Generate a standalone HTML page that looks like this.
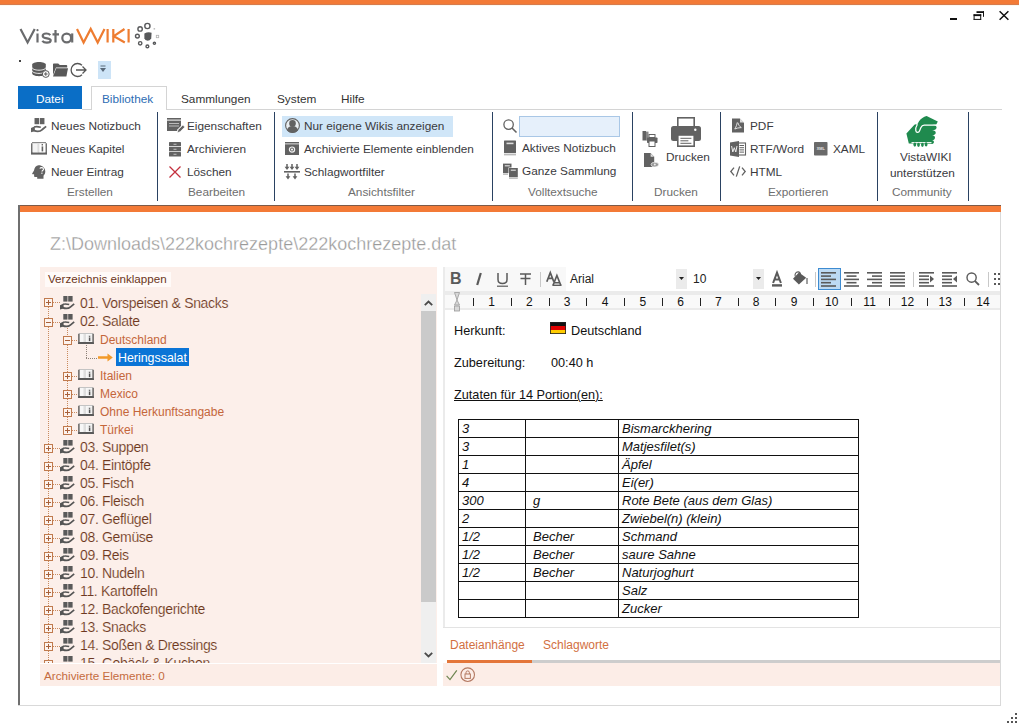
<!DOCTYPE html>
<html><head><meta charset="utf-8">
<style>
html,body{margin:0;padding:0;width:1019px;height:727px;overflow:hidden;background:#fff;position:relative;font-family:"Liberation Sans",sans-serif;}
.a{position:absolute;white-space:nowrap;}
.t12{font-size:11.8px;line-height:12px;color:#3a3a3e;}
.lbl{font-size:11.8px;line-height:12px;color:#6e6e6e;}
.sep{position:absolute;width:1px;background:#2a4262;top:112px;height:89px;}
svg{position:absolute;overflow:visible;}
.tr0{font-size:14px;line-height:14px;color:#6e3820;letter-spacing:-0.33px;-webkit-text-stroke:0.15px #fcefea;}
.tr1{font-size:12px;line-height:12px;color:#c4663a;}
.cell{position:absolute;font-size:13.33px;line-height:13px;font-style:italic;color:#111;white-space:nowrap;}
</style></head><body>

<div class="a" style="left:0;top:0;width:1019px;height:4px;background:#f37a36;"></div>
<div class="a" style="left:0;top:4px;width:1019px;height:1px;background:#d67c4e;"></div>
<div class="a" style="left:0;top:5px;width:1019px;height:1px;background:#fdf8ee;"></div>
<div class="a" style="left:950px;top:17.6px;width:7px;height:2.6px;background:#111;"></div>
<svg style="left:973px;top:11px" width="11" height="9" viewBox="0 0 11 9"><g fill="#111"><rect x="3.5" y="0.2" width="7.5" height="1.8"/><rect x="10" y="0.2" width="1" height="5.6"/><rect x="0.6" y="3.2" width="7.6" height="1.9"/><rect x="0.6" y="3.2" width="1" height="5.6"/><rect x="7.2" y="3.2" width="1" height="5.6"/><rect x="0.6" y="7.9" width="7.6" height="1"/></g></svg>
<svg style="left:999px;top:11px" width="10" height="9" viewBox="0 0 10 9"><path d="M0.6 0.3L9.4 8.7M9.4 0.3L0.6 8.7" stroke="#111" stroke-width="1.5"/></svg>
<svg style="left:0;top:0" width="170" height="60" viewBox="0 0 170 60">
<g fill="none" stroke="#6a6b6d" stroke-width="2.2" stroke-linejoin="miter">
<path d="M20.5 29L27.6 42.5L34.7 29"/>
<path d="M37.5 33.5V42.5"/>
<path d="M50.3 35.2c-0.8-1.1-2.2-1.7-4-1.7c-2.2 0-3.6 1-3.6 2.4c0 3.2 8 1.9 8 4.4c0 1.5-1.5 2.4-3.9 2.4c-2 0-3.6-0.7-4.5-1.9"/>
<path d="M55.5 30V42.5M52.5 34.3H59"/>
<circle cx="66.7" cy="38" r="4.4"/>
<path d="M72.2 33.4V42.5"/>
</g>
<circle cx="37.5" cy="30.2" r="1.1" fill="#6a6b6d"/>
<g fill="none" stroke="#ee7c30" stroke-width="2.2">
<path d="M77 29L83.6 42.5L90.7 29L97.7 42.5L104.5 29"/>
<path d="M107.6 29V42.5"/>
<path d="M113.3 29V42.5M124.5 29L113.8 36.2L124.8 42.5"/>
<path d="M128.6 29V42.5"/>
</g>
<g fill="none" stroke="#58595b" stroke-width="1.4">
<circle cx="140.1" cy="28.9" r="2.2"/><circle cx="147.4" cy="26" r="2.6"/><circle cx="137.4" cy="36.1" r="1.9"/><circle cx="140.2" cy="43.3" r="1.7"/><circle cx="147.4" cy="46.4" r="1.4"/><circle cx="154.4" cy="43.3" r="1.1"/>
</g>
<path d="M144.4 33.6Q148 31.6 151.6 32.8L151.2 38.6Q149.9 40.8 147.6 40.8Q144.9 40.5 144.4 38.3z" fill="#58595b"/>
<rect x="156.3" y="35.3" width="2.4" height="2.4" fill="none" stroke="#b0b0b0" stroke-width="0.8"/>
<rect x="153.6" y="28" width="1.5" height="1.6" fill="#c0c0c0"/>
</svg>
<div class="a" style="left:19px;top:60px;width:2px;height:2px;background:#444"></div>
<svg style="left:32px;top:62px" width="18" height="16" viewBox="0 0 18 16">
<path d="M0.2 2.6C0.2 1.2 3.2 0 7 0s6.8 1.2 6.8 2.6V11.6c0 1.5-3 2.6-6.8 2.6S0.2 13.1 0.2 11.6z" fill="#595959"/>
<path d="M0.2 5.6c0 1.4 3 2.6 6.8 2.6s6.8-1.2 6.8-2.6M0.2 8.8c0 1.4 3 2.6 6.8 2.6s6.8-1.2 6.8-2.6" fill="none" stroke="#fff" stroke-width="0.9"/>
<circle cx="13.8" cy="12" r="3.4" fill="#fff" stroke="#595959" stroke-width="1"/><path d="M13.8 10.2v3.6M12 12h3.6" stroke="#595959" stroke-width="1"/></svg>
<svg style="left:53px;top:63px" width="15" height="14" viewBox="0 0 15 14"><path d="M0 1.2Q0 0.4 0.8 0.4h4.4l1.6 1.6h6.6q0.8 0 0.8 0.8V4.6H3L0 12z" fill="#595959"/><path d="M3.2 5.2H15L13.4 13.4H0z" fill="#595959"/></svg>
<svg style="left:71px;top:62px" width="16" height="16" viewBox="0 0 16 16"><path d="M11 3.2A6.5 6.5 0 1 0 11 12.8" fill="none" stroke="#555" stroke-width="1.3"/><path d="M5 8h10M11.5 4.5L15 8l-3.5 3.5" fill="none" stroke="#555" stroke-width="1.3"/></svg>
<div class="a" style="left:98px;top:61px;width:13px;height:18px;background:#cde4f7;"></div>
<svg style="left:100px;top:65px" width="6" height="7" viewBox="0 0 6 7"><rect x="0.5" y="0.5" width="5" height="1" fill="#5a6a7a"/><path d="M0 3h6L3 7z" fill="#5a6a7a"/></svg>
<div class="a" style="left:82px;top:109px;width:920px;height:1px;background:#d4d4d4;"></div>
<div class="a" style="left:18px;top:86px;width:64px;height:23px;background:#0a6ec6;"></div>
<div class="a t12" style="left:36px;top:93px;color:#fff;">Datei</div>
<div class="a" style="left:91px;top:86px;width:76px;height:24px;border:1px solid #d4d4d4;border-bottom:none;background:#fff;box-sizing:border-box;"></div>
<div class="a t12" style="left:102px;top:93px;color:#2e6db4;">Bibliothek</div>
<div class="a t12" style="left:181px;top:93px;color:#333;">Sammlungen</div>
<div class="a t12" style="left:277px;top:93px;color:#333;">System</div>
<div class="a t12" style="left:341px;top:93px;color:#333;">Hilfe</div>
<div class="sep" style="left:157px"></div>
<div class="sep" style="left:274px"></div>
<div class="sep" style="left:492px"></div>
<div class="sep" style="left:632px"></div>
<div class="sep" style="left:720px"></div>
<div class="sep" style="left:877px"></div>
<div class="sep" style="left:968px"></div>
<div class="a t12" style="left:51px;top:120px;">Neues Notizbuch</div>
<div class="a t12" style="left:51px;top:143px;">Neues Kapitel</div>
<div class="a t12" style="left:51px;top:166px;">Neuer Eintrag</div>
<div class="a lbl" style="left:67px;top:186px;">Erstellen</div>
<div class="a t12" style="left:187px;top:120px;">Eigenschaften</div>
<div class="a t12" style="left:187px;top:143px;">Archivieren</div>
<div class="a t12" style="left:187px;top:166px;">Löschen</div>
<div class="a lbl" style="left:188px;top:186px;">Bearbeiten</div>
<div class="a" style="left:282px;top:116px;width:171px;height:21px;background:#d0e6f8;"></div>
<div class="a t12" style="left:304px;top:120px;">Nur eigene Wikis anzeigen</div>
<div class="a t12" style="left:304px;top:143px;">Archivierte Elemente einblenden</div>
<div class="a t12" style="left:304px;top:166px;">Schlagwortfilter</div>
<div class="a lbl" style="left:348px;top:186px;">Ansichtsfilter</div>
<div class="a" style="left:519px;top:116px;width:101px;height:21px;background:#e6f0fb;border:1px solid #a9c7e6;box-sizing:border-box;"></div>
<div class="a t12" style="left:522px;top:142px;">Aktives Notizbuch</div>
<div class="a t12" style="left:522px;top:165px;">Ganze Sammlung</div>
<div class="a lbl" style="left:528px;top:186px;">Volltextsuche</div>
<div class="a t12" style="left:666px;top:151px;">Drucken</div>
<div class="a lbl" style="left:654px;top:186px;">Drucken</div>
<div class="a t12" style="left:750px;top:120px;">PDF</div>
<div class="a t12" style="left:750px;top:143px;">RTF/Word</div>
<div class="a t12" style="left:833px;top:143px;">XAML</div>
<div class="a t12" style="left:750px;top:166px;">HTML</div>
<div class="a lbl" style="left:768px;top:186px;">Exportieren</div>
<div class="a t12" style="left:900px;top:151px;">VistaWIKI</div>
<div class="a t12" style="left:890px;top:167px;">unterstützen</div>
<div class="a lbl" style="left:892px;top:186px;">Community</div>
<svg style="left:31px;top:118px" width="16" height="15" viewBox="0 0 15 14"><rect x="3.3" y="0" width="4.2" height="5.8" fill="#626262"/><rect x="8.2" y="0" width="4.4" height="5.8" fill="#626262"/><path d="M0 9.3L3.6 7.6V12.4L0 13.4z" fill="#626262"/><path d="M3 8.4C4.6 7.9 6.5 8 9.2 8.6" fill="none" stroke="#626262" stroke-width="1.5"/><path d="M2.6 11.6C5.4 12.8 8.6 12.6 10.6 10.8L14.2 7.8" fill="none" stroke="#626262" stroke-width="1.7"/></svg>
<svg style="left:31px;top:142px" width="16" height="13" viewBox="0 0 16 13"><path d="M0.9 1.3v10h14.2v-10" fill="none" stroke="#626262" stroke-width="1.6"/><rect x="1.6" y="0.8" width="5.8" height="10" fill="#f4f4f4"/><rect x="8.2" y="0.8" width="6.2" height="10" fill="#fff"/><rect x="1" y="0" width="14" height="1.2" fill="#8a8a8a"/><rect x="6.4" y="1" width="2" height="9.5" fill="#dcdcdc"/><rect x="10.6" y="2.2" width="1.4" height="1.2" fill="#444"/><rect x="10.6" y="4.4" width="1.6" height="5" fill="#626262"/><rect x="0" y="10.6" width="16" height="2" fill="#626262"/></svg>
<svg style="left:32px;top:165px" width="14" height="14" viewBox="0 0 14 14"><path d="M6.5 0.3c3.8 0 6.8 2.6 6.8 6.2c0 1.8-.8 3.2-1.8 4.2V13.7H5.2v-1.6H3.3c-.8 0-1.2-.5-1.2-1.2V9.3H.6c-.4 0-.6-.4-.4-.7L2 5.6C2.4 2.6 4.2.3 6.5.3z" fill="#626262"/><path d="M7.8 3.6c.4-.7 1.1-1 1.9-1c1 0 1.8.7 1.8 1.6c0 1.2-1.6 1.3-1.6 2.4" fill="none" stroke="#fff" stroke-width="1.1"/><rect x="9.3" y="7.6" width="1.2" height="1.2" fill="#fff"/></svg>
<svg style="left:167px;top:118px" width="17" height="16" viewBox="0 0 17 16"><rect x="0" y="0" width="14" height="1.6" fill="#626262"/><rect x="0" y="2.6" width="14" height="10.4" fill="#626262"/><rect x="2" y="5" width="10" height="1" fill="#bbb"/><rect x="2" y="7.5" width="10" height="1" fill="#bbb"/><path d="M9.5 14.5l1.2-3.3l5-5l2 2l-5 5z" fill="#fff"/><path d="M10.2 14.8l.9-3l4.7-4.7l2 2l-4.7 4.7z" fill="#626262" stroke="#fff" stroke-width="0.7"/></svg>
<svg style="left:169px;top:142px" width="12" height="15" viewBox="0 0 12 15"><rect x="0" y="0" width="12" height="4.3" rx="0.6" fill="#626262"/><rect x="0" y="5" width="12" height="4.3" fill="#626262"/><rect x="0" y="10" width="12" height="4.5" rx="0.6" fill="#626262"/><rect x="4.5" y="1.8" width="3" height="0.9" fill="#ccc"/><rect x="4.5" y="6.8" width="3" height="0.9" fill="#ccc"/><rect x="4.5" y="11.8" width="3" height="0.9" fill="#ccc"/></svg>
<svg style="left:169px;top:166px" width="12" height="12" viewBox="0 0 12 12"><path d="M0.5 0.5L11.5 11.5M11.5 0.5L0.5 11.5" stroke="#c4303e" stroke-width="1.25"/></svg>
<svg style="left:285px;top:118px" width="15" height="15" viewBox="0 0 15 15"><circle cx="7.5" cy="7.5" r="6.9" fill="#e9eef2" stroke="#626262" stroke-width="1.1"/><circle cx="7.5" cy="5.4" r="3.3" fill="#626262"/><path d="M1.9 12.2c.8-2.8 2.8-4.2 5.6-4.2s4.8 1.4 5.6 4.2a7 7 0 0 1-11.2 0z" fill="#626262"/></svg>
<svg style="left:285px;top:142px" width="14" height="13" viewBox="0 0 14 13"><rect x="0" y="0" width="14" height="1.5" fill="#626262"/><rect x="0" y="2.3" width="14" height="10.7" fill="#626262"/><circle cx="7" cy="7.6" r="2.6" fill="none" stroke="#f2f2f2" stroke-width="1.2"/><circle cx="7" cy="7.6" r="1.1" fill="#f2f2f2"/></svg>
<svg style="left:284px;top:164px" width="16" height="16" viewBox="0 0 16 16"><g stroke="#626262" stroke-width="1.5" fill="none"><path d="M3 0v3.5M8 0v3.5M13 0v3.5M4 9.5v3.5M11 9.5v3.5"/></g><g fill="#626262"><path d="M0.6 2.8h4.8L3 6z"/><path d="M5.6 2.8h4.8L8 6z"/><path d="M10.6 2.8h4.8L13 6z"/><path d="M1.6 12.2h4.8L4 15.4z"/><path d="M8.6 12.2h4.8L11 15.4z"/><rect x="0" y="7" width="16" height="1.6"/></g></svg>
<svg style="left:503px;top:119px" width="14" height="14" viewBox="0 0 14 14"><circle cx="5.6" cy="5.6" r="4.7" fill="none" stroke="#626262" stroke-width="1.3"/><path d="M9 9L13.5 13.5" stroke="#626262" stroke-width="1.6"/></svg>
<svg style="left:504px;top:140px" width="12" height="16" viewBox="0 0 12 16"><rect x="0" y="0.5" width="12" height="12.5" rx="0.5" fill="#626262"/><rect x="2.5" y="2.6" width="7" height="1.6" fill="#ddd"/><rect x="0" y="13.6" width="12" height="1.8" fill="#bbb"/></svg>
<svg style="left:503px;top:163px" width="15" height="16" viewBox="0 0 15 16"><rect x="0" y="0.6" width="8.5" height="9.5" fill="#626262"/><rect x="1.8" y="2.2" width="5" height="1.2" fill="#ddd"/><rect x="0" y="10.5" width="5" height="1.4" fill="#bbb"/><rect x="5.5" y="4.5" width="9.3" height="9.8" fill="#fff"/><rect x="6" y="5" width="8.8" height="9.2" fill="#626262"/><rect x="7.8" y="6.6" width="5" height="1.2" fill="#ddd"/><rect x="6" y="14.5" width="8.8" height="1.4" fill="#bbb"/></svg>
<svg style="left:642px;top:131px" width="16" height="16" viewBox="0 0 16 16"><rect x="0.5" y="0" width="3.5" height="9.5" fill="#626262"/><rect x="4" y="0.6" width="2.5" height="9" fill="#888"/><rect x="7" y="3.5" width="6" height="3" fill="#fff" stroke="#626262" stroke-width="1"/><rect x="5" y="6.5" width="10.5" height="5.5" rx="0.8" fill="#626262"/><rect x="7" y="10" width="6" height="5.5" fill="#fff" stroke="#626262" stroke-width="1"/></svg>
<svg style="left:644px;top:153px" width="15" height="15" viewBox="0 0 15 15"><path d="M0 0h6.5l3.7 3.7V14H0z" fill="#626262"/><path d="M6.6 0.4v3.4h3.4" fill="#e0e0e0"/><ellipse cx="10.8" cy="11.6" rx="3.8" ry="2.3" fill="#999" stroke="#fff" stroke-width="0.6"/><circle cx="10.8" cy="11.6" r="1" fill="#eee"/></svg>
<svg style="left:671px;top:117px" width="30" height="30" viewBox="0 0 30 30"><rect x="6.8" y="0.8" width="16.4" height="9" fill="#fff" stroke="#626262" stroke-width="1.6"/><rect x="0" y="9" width="30" height="15" rx="2.5" fill="#626262"/><circle cx="24.3" cy="12.7" r="1.2" fill="#fff"/><rect x="6.8" y="18" width="16.4" height="11.2" fill="#fff" stroke="#626262" stroke-width="1.6"/><rect x="9.4" y="20.8" width="11" height="1" fill="#626262"/><rect x="9.4" y="23.3" width="8" height="1" fill="#626262"/><rect x="9.4" y="25.8" width="11" height="1" fill="#626262"/></svg>
<svg style="left:732px;top:118px" width="12" height="15" viewBox="0 0 12 15"><path d="M0 0.5h7.8L12 4.7V14.5H0z" fill="#626262"/><path d="M8 0.6v4h4" fill="#ddd"/><path d="M5.2 4.5c-.2 1.8-.9 4-2.4 6.5c1.8-.8 4-1.4 6.5-1.4c-1.7-1-2.8-2.8-3.5-5" fill="none" stroke="#eee" stroke-width="0.9"/></svg>
<svg style="left:730px;top:141px" width="16" height="16" viewBox="0 0 16 16"><rect x="8" y="2" width="7.5" height="12" fill="#fff" stroke="#626262" stroke-width="1.1"/><rect x="9.5" y="4" width="4.5" height="1" fill="#626262"/><rect x="9.5" y="6.2" width="4.5" height="1" fill="#626262"/><rect x="9.5" y="8.4" width="4.5" height="1" fill="#626262"/><rect x="9.5" y="10.6" width="4.5" height="1" fill="#626262"/><path d="M0 1.6L9 0v16L0 14.4z" fill="#626262"/><path d="M1.6 5l1.2 6l1.5-4.3l1.5 4.3l1.2-6" fill="none" stroke="#eee" stroke-width="1"/></svg>
<svg style="left:730px;top:166px" width="16" height="11" viewBox="0 0 16 11"><path d="M4 1.6L0.8 5.5L4 9.4M12 1.6l3.2 3.9L12 9.4M9.7 0.4L6.3 10.6" fill="none" stroke="#626262" stroke-width="1.3"/></svg>
<svg style="left:814px;top:142px" width="14" height="14" viewBox="0 0 14 14"><rect x="0" y="0" width="13.5" height="13.5" rx="0.8" fill="#6a6a6a"/><text x="6.75" y="8.2" font-size="3.8" font-family="Liberation Sans" font-weight="bold" fill="#e5e5e5" text-anchor="middle">XML</text></svg>
<svg style="left:906px;top:116px" width="33" height="32" viewBox="0 0 33 32">
<path d="M0.4 17.4L8.2 8.9Q9.1 8 10 8.4L11.2 8.6L13.2 4.9C15 2.6 17.5 0.8 20.6 0L31.8 5.4L30.2 8.8H26.1C32.1 8.8 32.1 14.3 26.1 14.3C31.0 14.3 31.0 19.3 26.1 19.3C30.0 19.3 30.0 24.2 26.1 24.2C28.6 24.2 28.6 27.9 26.1 27.9L2.8 27.4z" fill="#1f8a4e"/>
<path d="M31 9.1H18.2C16.4 9.1 15.6 10 14.8 11.8L13.6 14.8C12.9 16.8 10.2 17.3 9.8 14.6C9.5 12.6 10.2 10.2 11.4 8.2" fill="none" stroke="#fff" stroke-width="1.25"/>
<rect x="5.5" y="26.1" width="20" height="1.2" fill="#fff"/>
<g fill="#1f8a4e"><ellipse cx="8.8" cy="28.6" rx="1.4" ry="2.1"/><ellipse cx="12.5" cy="28.8" rx="1.4" ry="2.1"/><ellipse cx="16.4" cy="28.8" rx="1.4" ry="2.1"/><ellipse cx="20.1" cy="28.4" rx="1.4" ry="2.1"/></g>
</svg>
<div class="a" style="left:18px;top:205px;width:983px;height:1px;background:#7c5a48;"></div>
<div class="a" style="left:18px;top:206px;width:983px;height:6px;background:#f37a36;"></div>
<div class="a" style="left:18px;top:205px;width:2px;height:501px;background:#6f6f6f;"></div>
<div class="a" style="left:1000px;top:212px;width:1px;height:494px;background:#d9d9d9;"></div>
<div class="a" style="left:18px;top:705px;width:983px;height:1px;background:#d9d9d9;"></div>
<div class="a" style="left:50px;top:235px;font-size:18px;line-height:18px;color:#9a9a9a;-webkit-text-stroke:0.3px #fff;">Z:\Downloads\222kochrezepte\222kochrezepte.dat</div>
<div class="a" style="left:40px;top:267px;width:397px;height:396px;background:#fcefea;overflow:hidden;">
<div class="a" style="left:5px;top:5px;width:126px;height:15px;background:#fffaf8;"></div>
<div class="a" style="left:8px;top:6px;font-size:11.6px;line-height:12px;color:#6b3520;">Verzeichnis einklappen</div>
<div class="a" style="left:8px;top:40px;width:1px;height:373px;background:repeating-linear-gradient(to bottom,#c98a5e 0 1px,transparent 1px 2px);"></div>
<div class="a" style="left:27px;top:61px;width:1px;height:8px;background:repeating-linear-gradient(to bottom,#c98a5e 0 1px,transparent 1px 2px);"></div>
<div class="a" style="left:27px;top:78px;width:1px;height:90px;background:repeating-linear-gradient(to bottom,#c98a5e 0 1px,transparent 1px 2px);"></div>
<div class="a" style="left:46px;top:78px;width:1px;height:13px;background:repeating-linear-gradient(to bottom,#8d8178 0 1px,transparent 1px 2px);"></div>
<svg style="left:4px;top:31px" width="9" height="9" viewBox="0 0 9 9"><rect x="0.5" y="0.5" width="8" height="8" fill="#fdf3ee" stroke="#c07a4e"/><path d="M2 4.5h5M4.5 2v5" stroke="#a8603a" stroke-width="1"/></svg>
<div class="a" style="left:13px;top:35px;width:7px;height:1px;background:repeating-linear-gradient(to right,#c98a5e 0 1px,transparent 1px 2px);"></div>
<svg style="left:20px;top:29px" width="15" height="14" viewBox="0 0 15 14"><rect x="3.3" y="0" width="4.2" height="5.6" fill="#5a5a5a"/><rect x="8.2" y="0" width="4.4" height="5.6" fill="#5a5a5a"/><path d="M0 9.3L3.6 7.6V12.4L0 13.4z" fill="#555"/><path d="M3 8.4C4.6 7.9 6.5 8 9.2 8.6" fill="none" stroke="#555" stroke-width="1.5"/><path d="M2.6 11.6C5.4 12.8 8.6 12.6 10.6 10.8L14.2 7.8" fill="none" stroke="#555" stroke-width="1.7"/></svg>
<div class="a tr0" style="left:40px;top:29px">01. Vorspeisen &amp; Snacks</div>
<svg style="left:4px;top:51px" width="9" height="9" viewBox="0 0 9 9"><rect x="0.5" y="0.5" width="8" height="8" fill="#fdf3ee" stroke="#c07a4e"/><path d="M2 4.5h5" stroke="#a8603a" stroke-width="1"/></svg>
<div class="a" style="left:13px;top:55px;width:7px;height:1px;background:repeating-linear-gradient(to right,#c98a5e 0 1px,transparent 1px 2px);"></div>
<svg style="left:20px;top:47px" width="15" height="14" viewBox="0 0 15 14"><rect x="3.3" y="0" width="4.2" height="5.6" fill="#5a5a5a"/><rect x="8.2" y="0" width="4.4" height="5.6" fill="#5a5a5a"/><path d="M0 9.3L3.6 7.6V12.4L0 13.4z" fill="#555"/><path d="M3 8.4C4.6 7.9 6.5 8 9.2 8.6" fill="none" stroke="#555" stroke-width="1.5"/><path d="M2.6 11.6C5.4 12.8 8.6 12.6 10.6 10.8L14.2 7.8" fill="none" stroke="#555" stroke-width="1.7"/></svg>
<div class="a tr0" style="left:40px;top:47px">02. Salate</div>
<svg style="left:23px;top:69px" width="9" height="9" viewBox="0 0 9 9"><rect x="0.5" y="0.5" width="8" height="8" fill="#fdf3ee" stroke="#c07a4e"/><path d="M2 4.5h5" stroke="#a8603a" stroke-width="1"/></svg>
<div class="a" style="left:32px;top:73px;width:6px;height:1px;background:repeating-linear-gradient(to right,#c98a5e 0 1px,transparent 1px 2px);"></div>
<svg style="left:38px;top:66px" width="16" height="11" viewBox="0 0 16 11"><rect x="1.4" y="0.6" width="13.2" height="9" fill="#f7f7f7"/><rect x="5.5" y="0.6" width="2.5" height="9" fill="#dedede"/><rect x="1" y="0" width="14" height="1" fill="#c4c4c4"/><path d="M0.9 0.8V9.6H15.1V0.8" fill="none" stroke="#5a5a5a" stroke-width="1.4"/><rect x="0" y="9.3" width="16" height="1.7" rx="0.6" fill="#5a5a5a"/><rect x="9.6" y="2.2" width="4" height="6" fill="#e9e9e9"/><rect x="10.9" y="2.8" width="1.3" height="1" fill="#555"/><rect x="10.9" y="4.5" width="1.4" height="3.6" fill="#555"/></svg>
<div class="a tr1" style="left:60px;top:67px">Deutschland</div>
<div class="a" style="left:46px;top:91px;width:12px;height:1px;background:repeating-linear-gradient(to right,#8d8178 0 1px,transparent 1px 2px);"></div>
<svg style="left:58px;top:86px" width="15" height="9" viewBox="0 0 15 9"><path d="M0 3.2h9.5V0.6l5.3 3.9L9.5 8.4V5.8H0z" fill="#f29a2a"/></svg>
<div class="a" style="left:76px;top:81px;width:73px;height:18px;background:#0a74d6;"></div>
<div class="a" style="left:78px;top:85px;font-size:12.4px;line-height:12px;color:#fff;">Heringssalat</div>
<svg style="left:23px;top:105px" width="9" height="9" viewBox="0 0 9 9"><rect x="0.5" y="0.5" width="8" height="8" fill="#fdf3ee" stroke="#c07a4e"/><path d="M2 4.5h5M4.5 2v5" stroke="#a8603a" stroke-width="1"/></svg>
<div class="a" style="left:32px;top:109px;width:6px;height:1px;background:repeating-linear-gradient(to right,#c98a5e 0 1px,transparent 1px 2px);"></div>
<svg style="left:38px;top:102px" width="16" height="11" viewBox="0 0 16 11"><rect x="1.4" y="0.6" width="13.2" height="9" fill="#f7f7f7"/><rect x="5.5" y="0.6" width="2.5" height="9" fill="#dedede"/><rect x="1" y="0" width="14" height="1" fill="#c4c4c4"/><path d="M0.9 0.8V9.6H15.1V0.8" fill="none" stroke="#5a5a5a" stroke-width="1.4"/><rect x="0" y="9.3" width="16" height="1.7" rx="0.6" fill="#5a5a5a"/><rect x="9.6" y="2.2" width="4" height="6" fill="#e9e9e9"/><rect x="10.9" y="2.8" width="1.3" height="1" fill="#555"/><rect x="10.9" y="4.5" width="1.4" height="3.6" fill="#555"/></svg>
<div class="a tr1" style="left:60px;top:103px">Italien</div>
<svg style="left:23px;top:123px" width="9" height="9" viewBox="0 0 9 9"><rect x="0.5" y="0.5" width="8" height="8" fill="#fdf3ee" stroke="#c07a4e"/><path d="M2 4.5h5M4.5 2v5" stroke="#a8603a" stroke-width="1"/></svg>
<div class="a" style="left:32px;top:127px;width:6px;height:1px;background:repeating-linear-gradient(to right,#c98a5e 0 1px,transparent 1px 2px);"></div>
<svg style="left:38px;top:120px" width="16" height="11" viewBox="0 0 16 11"><rect x="1.4" y="0.6" width="13.2" height="9" fill="#f7f7f7"/><rect x="5.5" y="0.6" width="2.5" height="9" fill="#dedede"/><rect x="1" y="0" width="14" height="1" fill="#c4c4c4"/><path d="M0.9 0.8V9.6H15.1V0.8" fill="none" stroke="#5a5a5a" stroke-width="1.4"/><rect x="0" y="9.3" width="16" height="1.7" rx="0.6" fill="#5a5a5a"/><rect x="9.6" y="2.2" width="4" height="6" fill="#e9e9e9"/><rect x="10.9" y="2.8" width="1.3" height="1" fill="#555"/><rect x="10.9" y="4.5" width="1.4" height="3.6" fill="#555"/></svg>
<div class="a tr1" style="left:60px;top:121px">Mexico</div>
<svg style="left:23px;top:141px" width="9" height="9" viewBox="0 0 9 9"><rect x="0.5" y="0.5" width="8" height="8" fill="#fdf3ee" stroke="#c07a4e"/><path d="M2 4.5h5M4.5 2v5" stroke="#a8603a" stroke-width="1"/></svg>
<div class="a" style="left:32px;top:145px;width:6px;height:1px;background:repeating-linear-gradient(to right,#c98a5e 0 1px,transparent 1px 2px);"></div>
<svg style="left:38px;top:138px" width="16" height="11" viewBox="0 0 16 11"><rect x="1.4" y="0.6" width="13.2" height="9" fill="#f7f7f7"/><rect x="5.5" y="0.6" width="2.5" height="9" fill="#dedede"/><rect x="1" y="0" width="14" height="1" fill="#c4c4c4"/><path d="M0.9 0.8V9.6H15.1V0.8" fill="none" stroke="#5a5a5a" stroke-width="1.4"/><rect x="0" y="9.3" width="16" height="1.7" rx="0.6" fill="#5a5a5a"/><rect x="9.6" y="2.2" width="4" height="6" fill="#e9e9e9"/><rect x="10.9" y="2.8" width="1.3" height="1" fill="#555"/><rect x="10.9" y="4.5" width="1.4" height="3.6" fill="#555"/></svg>
<div class="a tr1" style="left:60px;top:139px">Ohne Herkunftsangabe</div>
<svg style="left:23px;top:159px" width="9" height="9" viewBox="0 0 9 9"><rect x="0.5" y="0.5" width="8" height="8" fill="#fdf3ee" stroke="#c07a4e"/><path d="M2 4.5h5M4.5 2v5" stroke="#a8603a" stroke-width="1"/></svg>
<div class="a" style="left:32px;top:163px;width:6px;height:1px;background:repeating-linear-gradient(to right,#c98a5e 0 1px,transparent 1px 2px);"></div>
<svg style="left:38px;top:156px" width="16" height="11" viewBox="0 0 16 11"><rect x="1.4" y="0.6" width="13.2" height="9" fill="#f7f7f7"/><rect x="5.5" y="0.6" width="2.5" height="9" fill="#dedede"/><rect x="1" y="0" width="14" height="1" fill="#c4c4c4"/><path d="M0.9 0.8V9.6H15.1V0.8" fill="none" stroke="#5a5a5a" stroke-width="1.4"/><rect x="0" y="9.3" width="16" height="1.7" rx="0.6" fill="#5a5a5a"/><rect x="9.6" y="2.2" width="4" height="6" fill="#e9e9e9"/><rect x="10.9" y="2.8" width="1.3" height="1" fill="#555"/><rect x="10.9" y="4.5" width="1.4" height="3.6" fill="#555"/></svg>
<div class="a tr1" style="left:60px;top:157px">Türkei</div>
<svg style="left:4px;top:177px" width="9" height="9" viewBox="0 0 9 9"><rect x="0.5" y="0.5" width="8" height="8" fill="#fdf3ee" stroke="#c07a4e"/><path d="M2 4.5h5M4.5 2v5" stroke="#a8603a" stroke-width="1"/></svg>
<div class="a" style="left:13px;top:181px;width:7px;height:1px;background:repeating-linear-gradient(to right,#c98a5e 0 1px,transparent 1px 2px);"></div>
<svg style="left:20px;top:173px" width="15" height="14" viewBox="0 0 15 14"><rect x="3.3" y="0" width="4.2" height="5.6" fill="#5a5a5a"/><rect x="8.2" y="0" width="4.4" height="5.6" fill="#5a5a5a"/><path d="M0 9.3L3.6 7.6V12.4L0 13.4z" fill="#555"/><path d="M3 8.4C4.6 7.9 6.5 8 9.2 8.6" fill="none" stroke="#555" stroke-width="1.5"/><path d="M2.6 11.6C5.4 12.8 8.6 12.6 10.6 10.8L14.2 7.8" fill="none" stroke="#555" stroke-width="1.7"/></svg>
<div class="a tr0" style="left:40px;top:173px">03. Suppen</div>
<svg style="left:4px;top:195px" width="9" height="9" viewBox="0 0 9 9"><rect x="0.5" y="0.5" width="8" height="8" fill="#fdf3ee" stroke="#c07a4e"/><path d="M2 4.5h5M4.5 2v5" stroke="#a8603a" stroke-width="1"/></svg>
<div class="a" style="left:13px;top:199px;width:7px;height:1px;background:repeating-linear-gradient(to right,#c98a5e 0 1px,transparent 1px 2px);"></div>
<svg style="left:20px;top:191px" width="15" height="14" viewBox="0 0 15 14"><rect x="3.3" y="0" width="4.2" height="5.6" fill="#5a5a5a"/><rect x="8.2" y="0" width="4.4" height="5.6" fill="#5a5a5a"/><path d="M0 9.3L3.6 7.6V12.4L0 13.4z" fill="#555"/><path d="M3 8.4C4.6 7.9 6.5 8 9.2 8.6" fill="none" stroke="#555" stroke-width="1.5"/><path d="M2.6 11.6C5.4 12.8 8.6 12.6 10.6 10.8L14.2 7.8" fill="none" stroke="#555" stroke-width="1.7"/></svg>
<div class="a tr0" style="left:40px;top:191px">04. Eintöpfe</div>
<svg style="left:4px;top:213px" width="9" height="9" viewBox="0 0 9 9"><rect x="0.5" y="0.5" width="8" height="8" fill="#fdf3ee" stroke="#c07a4e"/><path d="M2 4.5h5M4.5 2v5" stroke="#a8603a" stroke-width="1"/></svg>
<div class="a" style="left:13px;top:217px;width:7px;height:1px;background:repeating-linear-gradient(to right,#c98a5e 0 1px,transparent 1px 2px);"></div>
<svg style="left:20px;top:209px" width="15" height="14" viewBox="0 0 15 14"><rect x="3.3" y="0" width="4.2" height="5.6" fill="#5a5a5a"/><rect x="8.2" y="0" width="4.4" height="5.6" fill="#5a5a5a"/><path d="M0 9.3L3.6 7.6V12.4L0 13.4z" fill="#555"/><path d="M3 8.4C4.6 7.9 6.5 8 9.2 8.6" fill="none" stroke="#555" stroke-width="1.5"/><path d="M2.6 11.6C5.4 12.8 8.6 12.6 10.6 10.8L14.2 7.8" fill="none" stroke="#555" stroke-width="1.7"/></svg>
<div class="a tr0" style="left:40px;top:209px">05. Fisch</div>
<svg style="left:4px;top:231px" width="9" height="9" viewBox="0 0 9 9"><rect x="0.5" y="0.5" width="8" height="8" fill="#fdf3ee" stroke="#c07a4e"/><path d="M2 4.5h5M4.5 2v5" stroke="#a8603a" stroke-width="1"/></svg>
<div class="a" style="left:13px;top:235px;width:7px;height:1px;background:repeating-linear-gradient(to right,#c98a5e 0 1px,transparent 1px 2px);"></div>
<svg style="left:20px;top:227px" width="15" height="14" viewBox="0 0 15 14"><rect x="3.3" y="0" width="4.2" height="5.6" fill="#5a5a5a"/><rect x="8.2" y="0" width="4.4" height="5.6" fill="#5a5a5a"/><path d="M0 9.3L3.6 7.6V12.4L0 13.4z" fill="#555"/><path d="M3 8.4C4.6 7.9 6.5 8 9.2 8.6" fill="none" stroke="#555" stroke-width="1.5"/><path d="M2.6 11.6C5.4 12.8 8.6 12.6 10.6 10.8L14.2 7.8" fill="none" stroke="#555" stroke-width="1.7"/></svg>
<div class="a tr0" style="left:40px;top:227px">06. Fleisch</div>
<svg style="left:4px;top:249px" width="9" height="9" viewBox="0 0 9 9"><rect x="0.5" y="0.5" width="8" height="8" fill="#fdf3ee" stroke="#c07a4e"/><path d="M2 4.5h5M4.5 2v5" stroke="#a8603a" stroke-width="1"/></svg>
<div class="a" style="left:13px;top:253px;width:7px;height:1px;background:repeating-linear-gradient(to right,#c98a5e 0 1px,transparent 1px 2px);"></div>
<svg style="left:20px;top:245px" width="15" height="14" viewBox="0 0 15 14"><rect x="3.3" y="0" width="4.2" height="5.6" fill="#5a5a5a"/><rect x="8.2" y="0" width="4.4" height="5.6" fill="#5a5a5a"/><path d="M0 9.3L3.6 7.6V12.4L0 13.4z" fill="#555"/><path d="M3 8.4C4.6 7.9 6.5 8 9.2 8.6" fill="none" stroke="#555" stroke-width="1.5"/><path d="M2.6 11.6C5.4 12.8 8.6 12.6 10.6 10.8L14.2 7.8" fill="none" stroke="#555" stroke-width="1.7"/></svg>
<div class="a tr0" style="left:40px;top:245px">07. Geflügel</div>
<svg style="left:4px;top:267px" width="9" height="9" viewBox="0 0 9 9"><rect x="0.5" y="0.5" width="8" height="8" fill="#fdf3ee" stroke="#c07a4e"/><path d="M2 4.5h5M4.5 2v5" stroke="#a8603a" stroke-width="1"/></svg>
<div class="a" style="left:13px;top:271px;width:7px;height:1px;background:repeating-linear-gradient(to right,#c98a5e 0 1px,transparent 1px 2px);"></div>
<svg style="left:20px;top:263px" width="15" height="14" viewBox="0 0 15 14"><rect x="3.3" y="0" width="4.2" height="5.6" fill="#5a5a5a"/><rect x="8.2" y="0" width="4.4" height="5.6" fill="#5a5a5a"/><path d="M0 9.3L3.6 7.6V12.4L0 13.4z" fill="#555"/><path d="M3 8.4C4.6 7.9 6.5 8 9.2 8.6" fill="none" stroke="#555" stroke-width="1.5"/><path d="M2.6 11.6C5.4 12.8 8.6 12.6 10.6 10.8L14.2 7.8" fill="none" stroke="#555" stroke-width="1.7"/></svg>
<div class="a tr0" style="left:40px;top:263px">08. Gemüse</div>
<svg style="left:4px;top:285px" width="9" height="9" viewBox="0 0 9 9"><rect x="0.5" y="0.5" width="8" height="8" fill="#fdf3ee" stroke="#c07a4e"/><path d="M2 4.5h5M4.5 2v5" stroke="#a8603a" stroke-width="1"/></svg>
<div class="a" style="left:13px;top:289px;width:7px;height:1px;background:repeating-linear-gradient(to right,#c98a5e 0 1px,transparent 1px 2px);"></div>
<svg style="left:20px;top:281px" width="15" height="14" viewBox="0 0 15 14"><rect x="3.3" y="0" width="4.2" height="5.6" fill="#5a5a5a"/><rect x="8.2" y="0" width="4.4" height="5.6" fill="#5a5a5a"/><path d="M0 9.3L3.6 7.6V12.4L0 13.4z" fill="#555"/><path d="M3 8.4C4.6 7.9 6.5 8 9.2 8.6" fill="none" stroke="#555" stroke-width="1.5"/><path d="M2.6 11.6C5.4 12.8 8.6 12.6 10.6 10.8L14.2 7.8" fill="none" stroke="#555" stroke-width="1.7"/></svg>
<div class="a tr0" style="left:40px;top:281px">09. Reis</div>
<svg style="left:4px;top:303px" width="9" height="9" viewBox="0 0 9 9"><rect x="0.5" y="0.5" width="8" height="8" fill="#fdf3ee" stroke="#c07a4e"/><path d="M2 4.5h5M4.5 2v5" stroke="#a8603a" stroke-width="1"/></svg>
<div class="a" style="left:13px;top:307px;width:7px;height:1px;background:repeating-linear-gradient(to right,#c98a5e 0 1px,transparent 1px 2px);"></div>
<svg style="left:20px;top:299px" width="15" height="14" viewBox="0 0 15 14"><rect x="3.3" y="0" width="4.2" height="5.6" fill="#5a5a5a"/><rect x="8.2" y="0" width="4.4" height="5.6" fill="#5a5a5a"/><path d="M0 9.3L3.6 7.6V12.4L0 13.4z" fill="#555"/><path d="M3 8.4C4.6 7.9 6.5 8 9.2 8.6" fill="none" stroke="#555" stroke-width="1.5"/><path d="M2.6 11.6C5.4 12.8 8.6 12.6 10.6 10.8L14.2 7.8" fill="none" stroke="#555" stroke-width="1.7"/></svg>
<div class="a tr0" style="left:40px;top:299px">10. Nudeln</div>
<svg style="left:4px;top:321px" width="9" height="9" viewBox="0 0 9 9"><rect x="0.5" y="0.5" width="8" height="8" fill="#fdf3ee" stroke="#c07a4e"/><path d="M2 4.5h5M4.5 2v5" stroke="#a8603a" stroke-width="1"/></svg>
<div class="a" style="left:13px;top:325px;width:7px;height:1px;background:repeating-linear-gradient(to right,#c98a5e 0 1px,transparent 1px 2px);"></div>
<svg style="left:20px;top:317px" width="15" height="14" viewBox="0 0 15 14"><rect x="3.3" y="0" width="4.2" height="5.6" fill="#5a5a5a"/><rect x="8.2" y="0" width="4.4" height="5.6" fill="#5a5a5a"/><path d="M0 9.3L3.6 7.6V12.4L0 13.4z" fill="#555"/><path d="M3 8.4C4.6 7.9 6.5 8 9.2 8.6" fill="none" stroke="#555" stroke-width="1.5"/><path d="M2.6 11.6C5.4 12.8 8.6 12.6 10.6 10.8L14.2 7.8" fill="none" stroke="#555" stroke-width="1.7"/></svg>
<div class="a tr0" style="left:40px;top:317px">11. Kartoffeln</div>
<svg style="left:4px;top:339px" width="9" height="9" viewBox="0 0 9 9"><rect x="0.5" y="0.5" width="8" height="8" fill="#fdf3ee" stroke="#c07a4e"/><path d="M2 4.5h5M4.5 2v5" stroke="#a8603a" stroke-width="1"/></svg>
<div class="a" style="left:13px;top:343px;width:7px;height:1px;background:repeating-linear-gradient(to right,#c98a5e 0 1px,transparent 1px 2px);"></div>
<svg style="left:20px;top:335px" width="15" height="14" viewBox="0 0 15 14"><rect x="3.3" y="0" width="4.2" height="5.6" fill="#5a5a5a"/><rect x="8.2" y="0" width="4.4" height="5.6" fill="#5a5a5a"/><path d="M0 9.3L3.6 7.6V12.4L0 13.4z" fill="#555"/><path d="M3 8.4C4.6 7.9 6.5 8 9.2 8.6" fill="none" stroke="#555" stroke-width="1.5"/><path d="M2.6 11.6C5.4 12.8 8.6 12.6 10.6 10.8L14.2 7.8" fill="none" stroke="#555" stroke-width="1.7"/></svg>
<div class="a tr0" style="left:40px;top:335px">12. Backofengerichte</div>
<svg style="left:4px;top:357px" width="9" height="9" viewBox="0 0 9 9"><rect x="0.5" y="0.5" width="8" height="8" fill="#fdf3ee" stroke="#c07a4e"/><path d="M2 4.5h5M4.5 2v5" stroke="#a8603a" stroke-width="1"/></svg>
<div class="a" style="left:13px;top:361px;width:7px;height:1px;background:repeating-linear-gradient(to right,#c98a5e 0 1px,transparent 1px 2px);"></div>
<svg style="left:20px;top:353px" width="15" height="14" viewBox="0 0 15 14"><rect x="3.3" y="0" width="4.2" height="5.6" fill="#5a5a5a"/><rect x="8.2" y="0" width="4.4" height="5.6" fill="#5a5a5a"/><path d="M0 9.3L3.6 7.6V12.4L0 13.4z" fill="#555"/><path d="M3 8.4C4.6 7.9 6.5 8 9.2 8.6" fill="none" stroke="#555" stroke-width="1.5"/><path d="M2.6 11.6C5.4 12.8 8.6 12.6 10.6 10.8L14.2 7.8" fill="none" stroke="#555" stroke-width="1.7"/></svg>
<div class="a tr0" style="left:40px;top:353px">13. Snacks</div>
<svg style="left:4px;top:375px" width="9" height="9" viewBox="0 0 9 9"><rect x="0.5" y="0.5" width="8" height="8" fill="#fdf3ee" stroke="#c07a4e"/><path d="M2 4.5h5M4.5 2v5" stroke="#a8603a" stroke-width="1"/></svg>
<div class="a" style="left:13px;top:379px;width:7px;height:1px;background:repeating-linear-gradient(to right,#c98a5e 0 1px,transparent 1px 2px);"></div>
<svg style="left:20px;top:371px" width="15" height="14" viewBox="0 0 15 14"><rect x="3.3" y="0" width="4.2" height="5.6" fill="#5a5a5a"/><rect x="8.2" y="0" width="4.4" height="5.6" fill="#5a5a5a"/><path d="M0 9.3L3.6 7.6V12.4L0 13.4z" fill="#555"/><path d="M3 8.4C4.6 7.9 6.5 8 9.2 8.6" fill="none" stroke="#555" stroke-width="1.5"/><path d="M2.6 11.6C5.4 12.8 8.6 12.6 10.6 10.8L14.2 7.8" fill="none" stroke="#555" stroke-width="1.7"/></svg>
<div class="a tr0" style="left:40px;top:371px">14. Soßen &amp; Dressings</div>
<svg style="left:4px;top:393px" width="9" height="9" viewBox="0 0 9 9"><rect x="0.5" y="0.5" width="8" height="8" fill="#fdf3ee" stroke="#c07a4e"/><path d="M2 4.5h5M4.5 2v5" stroke="#a8603a" stroke-width="1"/></svg>
<div class="a" style="left:13px;top:397px;width:7px;height:1px;background:repeating-linear-gradient(to right,#c98a5e 0 1px,transparent 1px 2px);"></div>
<svg style="left:20px;top:389px" width="15" height="14" viewBox="0 0 15 14"><rect x="3.3" y="0" width="4.2" height="5.6" fill="#5a5a5a"/><rect x="8.2" y="0" width="4.4" height="5.6" fill="#5a5a5a"/><path d="M0 9.3L3.6 7.6V12.4L0 13.4z" fill="#555"/><path d="M3 8.4C4.6 7.9 6.5 8 9.2 8.6" fill="none" stroke="#555" stroke-width="1.5"/><path d="M2.6 11.6C5.4 12.8 8.6 12.6 10.6 10.8L14.2 7.8" fill="none" stroke="#555" stroke-width="1.7"/></svg>
<div class="a tr0" style="left:40px;top:389px">15. Gebäck &amp; Kuchen</div>
<div class="a" style="left:381px;top:27px;width:15px;height:369px;background:#efefef;"></div>
<div class="a" style="left:381px;top:44px;width:15px;height:291px;background:#cacaca;"></div>
<svg style="left:384px;top:33px" width="9" height="6" viewBox="0 0 9 6"><path d="M0.8 5.2L4.5 1.5L8.2 5.2" fill="none" stroke="#4a4a4a" stroke-width="1.8"/></svg>
<svg style="left:384px;top:385px" width="9" height="6" viewBox="0 0 9 6"><path d="M0.8 0.8L4.5 4.5L8.2 0.8" fill="none" stroke="#4a4a4a" stroke-width="1.8"/></svg>
</div>
<div class="a" style="left:40px;top:664px;width:397px;height:22px;background:#fcede7;"></div>
<div class="a" style="left:44px;top:670px;font-size:11.7px;line-height:12px;color:#c46b3e;">Archivierte Elemente: 0</div>
<div class="a" style="left:443px;top:267px;width:2px;height:361px;background:#ebebeb;"></div>
<div class="a" style="left:443px;top:627px;width:557px;height:1px;background:#e3e3e3;"></div>
<div class="a" style="left:445px;top:267px;width:121px;height:24px;background:#f8f8f8;"></div>
<div class="a" style="left:566px;top:269px;width:110px;height:20px;background:#fff;"></div>
<div class="a" style="left:687px;top:269px;width:66px;height:20px;background:#fff;"></div>
<div class="a" style="left:676px;top:269px;width:11px;height:20px;background:#ebebeb;"></div>
<div class="a" style="left:753px;top:269px;width:11px;height:20px;background:#ebebeb;"></div>
<div class="a" style="left:445px;top:291px;width:555px;height:19px;background:#ebebeb;"></div>
<div class="a" style="left:445px;top:295px;width:555px;height:13px;background:#f9f9f9;"></div>
<div class="a" style="left:450px;top:271px;font-size:16px;line-height:16px;font-weight:bold;color:#5a5a5a;">B</div>
<svg style="left:476px;top:273px" width="6" height="12" viewBox="0 0 6 12"><path d="M4.8 0L1.2 12" stroke="#5a5a5a" stroke-width="2.2"/></svg>
<svg style="left:497px;top:273px" width="11" height="14" viewBox="0 0 11 14"><path d="M1 0v6.5c0 2.5 1.6 4 4.5 4s4.5-1.5 4.5-4V0" fill="none" stroke="#5a5a5a" stroke-width="1.5"/><rect x="0" y="12.6" width="11" height="1.2" fill="#5a5a5a"/></svg>
<svg style="left:520px;top:273px" width="11" height="12" viewBox="0 0 11 12"><path d="M0 1h11M5.5 1v11M0.5 5.5h10" stroke="#5a5a5a" stroke-width="1.5"/></svg>
<div class="a" style="left:540px;top:272px;width:1px;height:15px;background:#c8c8c8;"></div>
<svg style="left:546px;top:272px" width="16" height="15" viewBox="0 0 16 15"><path d="M0.8 9.8L4.3 0.6L7.8 9.8M2.2 6.4h4.2" fill="none" stroke="#5a5a5a" stroke-width="1.7"/><path d="M6.9 13.6L10.9 3.4L14.9 13.6M8.4 10.8h5" fill="none" stroke="#5a5a5a" stroke-width="1.6"/><rect x="6.6" y="12.6" width="8.8" height="1.4" fill="#5a5a5a"/></svg>
<div class="a" style="left:570px;top:273px;font-size:12px;line-height:12px;color:#222;">Arial</div>
<svg style="left:679px;top:277px" width="5" height="3" viewBox="0 0 5 3"><path d="M0 0h5L2.5 3z" fill="#222"/></svg>
<div class="a" style="left:693px;top:273px;font-size:12px;line-height:12px;color:#222;">10</div>
<svg style="left:756px;top:277px" width="5" height="3" viewBox="0 0 5 3"><path d="M0 0h5L2.5 3z" fill="#222"/></svg>
<svg style="left:772px;top:272px" width="11" height="15" viewBox="0 0 11 15"><path d="M1.1 11L5 0.6L8.9 11M2.8 7.6h4.4" fill="none" stroke="#5a5a5a" stroke-width="2"/><rect x="0" y="12.2" width="10" height="2.4" fill="#5a5a5a"/></svg>
<svg style="left:792px;top:271px" width="17" height="15" viewBox="0 0 17 15"><path d="M1 7.8L6.9 1.4L14.2 6.8L6.9 13.6z" fill="#5a5a5a"/><path d="M3.2 5.3C2.6 3 3.8 1 6 0.9C7.6 0.8 8.6 2 8.4 3.6" fill="none" stroke="#5a5a5a" stroke-width="1.1"/><rect x="14.3" y="7" width="1.4" height="6" fill="#777"/></svg>
<div class="a" style="left:815px;top:272px;width:1px;height:15px;background:#c8c8c8;"></div>
<div class="a" style="left:818px;top:268px;width:23px;height:22px;background:#bddaf3;border:1px solid #3d8bd1;box-sizing:border-box;"></div>
<svg style="left:821px;top:271px" width="16" height="16" viewBox="0 0 16 16"><rect x="0" y="1.0" width="15" height="1.6" fill="#5a5a5a"/><rect x="0" y="4.3" width="10" height="1.6" fill="#5a5a5a"/><rect x="0" y="7.6" width="15" height="1.6" fill="#5a5a5a"/><rect x="0" y="10.9" width="10" height="1.6" fill="#5a5a5a"/><rect x="0" y="14.2" width="15" height="1.6" fill="#5a5a5a"/></svg>
<svg style="left:844px;top:271px" width="16" height="16" viewBox="0 0 16 16"><rect x="0" y="1.0" width="15" height="1.6" fill="#5a5a5a"/><rect x="2.5" y="4.3" width="10" height="1.6" fill="#5a5a5a"/><rect x="0" y="7.6" width="15" height="1.6" fill="#5a5a5a"/><rect x="2.5" y="10.9" width="10" height="1.6" fill="#5a5a5a"/><rect x="0" y="14.2" width="15" height="1.6" fill="#5a5a5a"/></svg>
<svg style="left:867px;top:271px" width="16" height="16" viewBox="0 0 16 16"><rect x="0" y="1.0" width="15" height="1.6" fill="#5a5a5a"/><rect x="5" y="4.3" width="10" height="1.6" fill="#5a5a5a"/><rect x="0" y="7.6" width="15" height="1.6" fill="#5a5a5a"/><rect x="5" y="10.9" width="10" height="1.6" fill="#5a5a5a"/><rect x="0" y="14.2" width="15" height="1.6" fill="#5a5a5a"/></svg>
<svg style="left:890px;top:271px" width="16" height="16" viewBox="0 0 16 16"><rect x="0" y="1.0" width="15" height="1.6" fill="#5a5a5a"/><rect x="0" y="4.3" width="15" height="1.6" fill="#5a5a5a"/><rect x="0" y="7.6" width="15" height="1.6" fill="#5a5a5a"/><rect x="0" y="10.9" width="15" height="1.6" fill="#5a5a5a"/><rect x="0" y="14.2" width="15" height="1.6" fill="#5a5a5a"/></svg>
<div class="a" style="left:913px;top:272px;width:1px;height:15px;background:#c8c8c8;"></div>
<svg style="left:919px;top:271px" width="16" height="16" viewBox="0 0 16 16"><rect x="0" y="1" width="15" height="1.6" fill="#5a5a5a"/><rect x="0" y="4.3" width="10" height="1.6" fill="#5a5a5a"/><rect x="0" y="7.6" width="10" height="1.6" fill="#5a5a5a"/><rect x="0" y="10.9" width="10" height="1.6" fill="#5a5a5a"/><rect x="0" y="14.2" width="15" height="1.6" fill="#5a5a5a"/><path d="M11 4.5l4 3.5l-4 3.5z" fill="#5a5a5a"/></svg>
<svg style="left:942px;top:271px" width="16" height="16" viewBox="0 0 16 16"><rect x="0" y="1" width="15" height="1.6" fill="#5a5a5a"/><rect x="0" y="4.3" width="10" height="1.6" fill="#5a5a5a"/><rect x="0" y="7.6" width="10" height="1.6" fill="#5a5a5a"/><rect x="0" y="10.9" width="10" height="1.6" fill="#5a5a5a"/><rect x="0" y="14.2" width="15" height="1.6" fill="#5a5a5a"/><path d="M15 4.5l-4 3.5l4 3.5z" fill="#5a5a5a"/></svg>
<svg style="left:966px;top:272px" width="14" height="14" viewBox="0 0 14 14"><circle cx="5.6" cy="5.6" r="4.6" fill="none" stroke="#5a5a5a" stroke-width="1.4"/><path d="M8.8 8.8L13 13" stroke="#5a5a5a" stroke-width="1.8"/></svg>
<div class="a" style="left:988px;top:272px;width:1px;height:15px;background:#c8c8c8;"></div>
<svg style="left:994px;top:273px" width="6" height="13" viewBox="0 0 6 13"><g fill="#5a5a5a"><rect x="0" y="0" width="2" height="2"/><rect x="4" y="0" width="2" height="2"/><rect x="0" y="5" width="2" height="2"/><rect x="4" y="5" width="2" height="2"/><rect x="0" y="10" width="2" height="2"/><rect x="4" y="10" width="2" height="2"/></g></svg>
<svg style="left:454px;top:292px" width="6" height="20" viewBox="0 0 6 20"><path d="M0.5 0.5h5L3 8L5.5 13h-5L3 8z" fill="#d8d8d8" stroke="#9a9a9a" stroke-width="0.8"/><rect x="0.5" y="14" width="5" height="5" fill="#d8d8d8" stroke="#9a9a9a" stroke-width="0.8"/></svg>
<div class="a" style="left:481.6px;width:20px;text-align:center;top:296px;font-size:12px;line-height:12px;color:#111;">1</div>
<div class="a" style="left:519.4px;width:20px;text-align:center;top:296px;font-size:12px;line-height:12px;color:#111;">2</div>
<div class="a" style="left:557.2px;width:20px;text-align:center;top:296px;font-size:12px;line-height:12px;color:#111;">3</div>
<div class="a" style="left:595.0px;width:20px;text-align:center;top:296px;font-size:12px;line-height:12px;color:#111;">4</div>
<div class="a" style="left:632.8px;width:20px;text-align:center;top:296px;font-size:12px;line-height:12px;color:#111;">5</div>
<div class="a" style="left:670.6px;width:20px;text-align:center;top:296px;font-size:12px;line-height:12px;color:#111;">6</div>
<div class="a" style="left:708.4px;width:20px;text-align:center;top:296px;font-size:12px;line-height:12px;color:#111;">7</div>
<div class="a" style="left:746.2px;width:20px;text-align:center;top:296px;font-size:12px;line-height:12px;color:#111;">8</div>
<div class="a" style="left:784.0px;width:20px;text-align:center;top:296px;font-size:12px;line-height:12px;color:#111;">9</div>
<div class="a" style="left:821.8px;width:20px;text-align:center;top:296px;font-size:12px;line-height:12px;color:#111;">10</div>
<div class="a" style="left:859.6px;width:20px;text-align:center;top:296px;font-size:12px;line-height:12px;color:#111;">11</div>
<div class="a" style="left:897.4px;width:20px;text-align:center;top:296px;font-size:12px;line-height:12px;color:#111;">12</div>
<div class="a" style="left:935.2px;width:20px;text-align:center;top:296px;font-size:12px;line-height:12px;color:#111;">13</div>
<div class="a" style="left:973.0px;width:20px;text-align:center;top:296px;font-size:12px;line-height:12px;color:#111;">14</div>
<div class="a" style="left:473.0px;top:298px;width:1px;height:8px;background:#222;"></div>
<div class="a" style="left:510.8px;top:298px;width:1px;height:8px;background:#222;"></div>
<div class="a" style="left:548.6px;top:298px;width:1px;height:8px;background:#222;"></div>
<div class="a" style="left:586.4px;top:298px;width:1px;height:8px;background:#222;"></div>
<div class="a" style="left:624.2px;top:298px;width:1px;height:8px;background:#222;"></div>
<div class="a" style="left:662.0px;top:298px;width:1px;height:8px;background:#222;"></div>
<div class="a" style="left:699.8px;top:298px;width:1px;height:8px;background:#222;"></div>
<div class="a" style="left:737.6px;top:298px;width:1px;height:8px;background:#222;"></div>
<div class="a" style="left:775.4px;top:298px;width:1px;height:8px;background:#222;"></div>
<div class="a" style="left:813.2px;top:298px;width:1px;height:8px;background:#222;"></div>
<div class="a" style="left:851.0px;top:298px;width:1px;height:8px;background:#222;"></div>
<div class="a" style="left:888.8px;top:298px;width:1px;height:8px;background:#222;"></div>
<div class="a" style="left:926.6px;top:298px;width:1px;height:8px;background:#222;"></div>
<div class="a" style="left:964.4px;top:298px;width:1px;height:8px;background:#222;"></div>
<div class="a" style="left:454px;top:325px;font-size:12.7px;line-height:13px;color:#111;">Herkunft:</div>
<svg style="left:550px;top:322px" width="16" height="12" viewBox="0 0 16 12"><rect x="0" y="0" width="16" height="12" fill="#222"/><rect x="0.8" y="4" width="14.4" height="4" fill="#e00000"/><rect x="0.8" y="8" width="14.4" height="3.2" fill="#ffcc00"/><rect x="0.8" y="0.8" width="14.4" height="3.2" fill="#111"/></svg>
<div class="a" style="left:571px;top:325px;font-size:12.7px;line-height:13px;color:#111;">Deutschland</div>
<div class="a" style="left:454px;top:357px;font-size:12.7px;line-height:13px;color:#111;">Zubereitung:</div>
<div class="a" style="left:551px;top:357px;font-size:12.7px;line-height:13px;color:#111;">00:40 h</div>
<div class="a" style="left:454px;top:389px;font-size:12.7px;line-height:13px;color:#111;text-decoration:underline;">Zutaten für 14 Portion(en):</div>
<div class="a" style="left:458px;top:419px;width:401px;height:1px;background:#111;"></div>
<div class="a" style="left:458px;top:437px;width:401px;height:1px;background:#111;"></div>
<div class="a" style="left:458px;top:455px;width:401px;height:1px;background:#111;"></div>
<div class="a" style="left:458px;top:473px;width:401px;height:1px;background:#111;"></div>
<div class="a" style="left:458px;top:491px;width:401px;height:1px;background:#111;"></div>
<div class="a" style="left:458px;top:509px;width:401px;height:1px;background:#111;"></div>
<div class="a" style="left:458px;top:527px;width:401px;height:1px;background:#111;"></div>
<div class="a" style="left:458px;top:545px;width:401px;height:1px;background:#111;"></div>
<div class="a" style="left:458px;top:563px;width:401px;height:1px;background:#111;"></div>
<div class="a" style="left:458px;top:581px;width:401px;height:1px;background:#111;"></div>
<div class="a" style="left:458px;top:599px;width:401px;height:1px;background:#111;"></div>
<div class="a" style="left:458px;top:617px;width:401px;height:1px;background:#111;"></div>
<div class="a" style="left:458px;top:419px;width:1px;height:199px;background:#111;"></div>
<div class="a" style="left:525px;top:419px;width:1px;height:199px;background:#111;"></div>
<div class="a" style="left:618px;top:419px;width:1px;height:199px;background:#111;"></div>
<div class="a" style="left:858px;top:419px;width:1px;height:199px;background:#111;"></div>
<div class="cell" style="left:462px;top:422px;font-size:13px;">3</div>
<div class="cell" style="left:622px;top:422px;font-size:13px;">Bismarckhering</div>
<div class="cell" style="left:462px;top:440px;font-size:13px;">3</div>
<div class="cell" style="left:622px;top:440px;font-size:13px;">Matjesfilet(s)</div>
<div class="cell" style="left:462px;top:458px;font-size:13px;">1</div>
<div class="cell" style="left:622px;top:458px;font-size:13px;">Äpfel</div>
<div class="cell" style="left:462px;top:476px;font-size:13px;">4</div>
<div class="cell" style="left:622px;top:476px;font-size:13px;">Ei(er)</div>
<div class="cell" style="left:462px;top:494px;font-size:13px;">300</div>
<div class="cell" style="left:533px;top:494px;font-size:13px;">g</div>
<div class="cell" style="left:622px;top:494px;font-size:13px;">Rote Bete (aus dem Glas)</div>
<div class="cell" style="left:462px;top:512px;font-size:13px;">2</div>
<div class="cell" style="left:622px;top:512px;font-size:13px;">Zwiebel(n) (klein)</div>
<div class="cell" style="left:462px;top:530px;font-size:13px;">1/2</div>
<div class="cell" style="left:533px;top:530px;font-size:13px;">Becher</div>
<div class="cell" style="left:622px;top:530px;font-size:13px;">Schmand</div>
<div class="cell" style="left:462px;top:548px;font-size:13px;">1/2</div>
<div class="cell" style="left:533px;top:548px;font-size:13px;">Becher</div>
<div class="cell" style="left:622px;top:548px;font-size:13px;">saure Sahne</div>
<div class="cell" style="left:462px;top:566px;font-size:13px;">1/2</div>
<div class="cell" style="left:533px;top:566px;font-size:13px;">Becher</div>
<div class="cell" style="left:622px;top:566px;font-size:13px;">Naturjoghurt</div>
<div class="cell" style="left:622px;top:584px;font-size:13px;">Salz</div>
<div class="cell" style="left:622px;top:602px;font-size:13px;">Zucker</div>
<div class="a" style="left:450px;top:639px;font-size:12px;line-height:12px;color:#d2703f;">Dateianhänge</div>
<div class="a" style="left:543px;top:639px;font-size:12px;line-height:12px;color:#d2703f;">Schlagworte</div>
<div class="a" style="left:447px;top:660px;width:553px;height:3px;background:#cdcdcd;"></div>
<div class="a" style="left:447px;top:660px;width:85px;height:3px;background:#e4763a;"></div>
<div class="a" style="left:443px;top:663px;width:557px;height:23px;background:#fcede7;"></div>
<svg style="left:446px;top:669px" width="12" height="12" viewBox="0 0 12 12"><path d="M0.6 6.8L4 10.6L10.8 1.4" fill="none" stroke="#6d8550" stroke-width="1.2"/></svg>
<svg style="left:460px;top:667px" width="16" height="16" viewBox="0 0 16 16"><circle cx="7.7" cy="7.7" r="6.8" fill="none" stroke="#b47a63" stroke-width="1.1"/><rect x="5" y="7" width="5.4" height="4.4" fill="none" stroke="#b47a63" stroke-width="1"/><path d="M6 7V5.6a1.7 1.7 0 0 1 3.4 0V7" fill="none" stroke="#b47a63" stroke-width="1"/></svg>
<svg style="left:1006px;top:712px" width="12" height="12" viewBox="0 0 12 12"><g fill="#555"><rect x="9" y="1" width="2" height="2"/><rect x="5" y="5" width="2" height="2"/><rect x="9" y="5" width="2" height="2"/><rect x="1" y="9" width="2" height="2"/><rect x="5" y="9" width="2" height="2"/><rect x="9" y="9" width="2" height="2"/></g></svg>
</body></html>
